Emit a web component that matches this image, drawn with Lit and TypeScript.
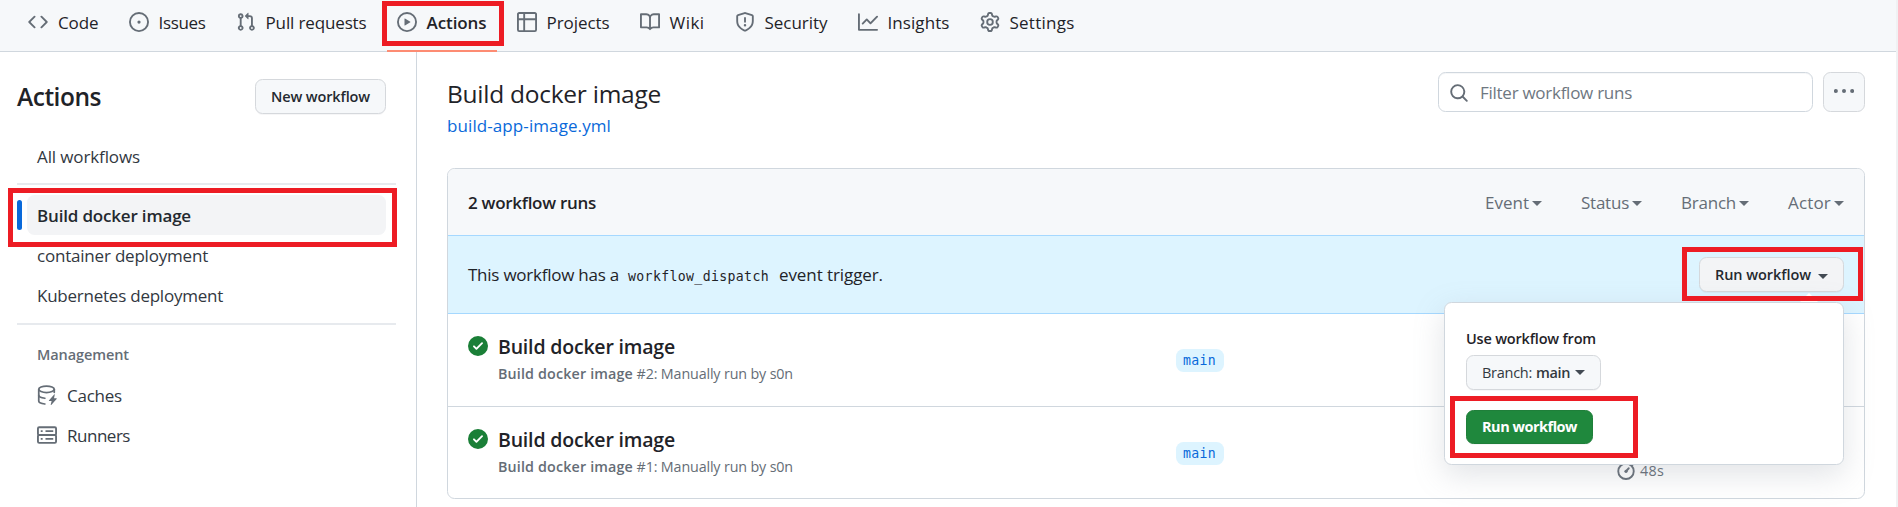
import { LitElement, html, css, svg } from "lit";
import { customElement, property } from "lit/decorators.js";

const icons: Record<string, unknown> = {
  code: svg`<path d="M4.72 3.22a.75.75 0 0 1 1.06 1.06L2.06 8l3.72 3.72a.75.75 0 1 1-1.06 1.06L.47 8.53a.75.75 0 0 1 0-1.06l4.25-4.25Zm6.56 0a.75.75 0 1 0-1.06 1.06L13.94 8l-3.72 3.72a.75.75 0 1 0 1.06 1.06l4.25-4.25a.75.75 0 0 0 0-1.06l-4.25-4.25Z"/>`,
  issue: svg`<path d="M8 9.3a1.3 1.3 0 1 0 0-2.6 1.3 1.3 0 0 0 0 2.6Z"/><path d="M8 0a8 8 0 1 1 0 16A8 8 0 0 1 8 0ZM1.5 8a6.5 6.5 0 1 0 13 0 6.5 6.5 0 0 0-13 0Z"/>`,
  pull: svg`<path d="M1.5 3.25a2.25 2.25 0 1 1 3 2.122v5.256a2.251 2.251 0 1 1-1.5 0V5.372A2.25 2.25 0 0 1 1.5 3.25Zm5.677-.177L9.573.677A.25.25 0 0 1 10 .854V2.5h1A2.5 2.5 0 0 1 13.5 5v5.628a2.251 2.251 0 1 1-1.5 0V5a1 1 0 0 0-1-1h-1v1.646a.25.25 0 0 1-.427.177L7.177 3.427a.25.25 0 0 1 0-.354ZM3.75 2.5a.75.75 0 1 0 0 1.5.75.75 0 0 0 0-1.5Zm0 9.5a.75.75 0 1 0 0 1.5.75.75 0 0 0 0-1.5Zm8.25.75a.75.75 0 1 0 1.5 0 .75.75 0 0 0-1.5 0Z"/>`,
  play: svg`<path d="M8 0a8 8 0 1 1 0 16A8 8 0 0 1 8 0ZM1.5 8a6.5 6.5 0 1 0 13 0 6.5 6.5 0 0 0-13 0Zm4.879-2.773 4.264 2.559a.25.25 0 0 1 0 .428l-4.264 2.559A.25.25 0 0 1 6 10.559V5.442a.25.25 0 0 1 .379-.215Z"/>`,
  table: svg`<path d="M0 1.75C0 .784.784 0 1.75 0h12.5C15.216 0 16 .784 16 1.75v12.5A1.75 1.75 0 0 1 14.25 16H1.75A1.75 1.75 0 0 1 0 14.25ZM6.5 6.5v8h7.75a.25.25 0 0 0 .25-.25V6.5Zm8-1.5V1.75a.25.25 0 0 0-.25-.25H6.5V5Zm-13 1.5v7.75c0 .138.112.25.25.25H5v-8ZM5 5V1.5H1.75a.25.25 0 0 0-.25.25V5Z"/>`,
  book: svg`<path d="M0 1.75A.75.75 0 0 1 .75 1h4.253c1.227 0 2.317.59 3 1.501A3.743 3.743 0 0 1 11.006 1h4.245a.75.75 0 0 1 .75.75v10.5a.75.75 0 0 1-.75.75h-4.507a2.25 2.25 0 0 0-1.591.659l-.622.621a.75.75 0 0 1-1.06 0l-.622-.621A2.25 2.25 0 0 0 5.258 13H.75a.75.75 0 0 1-.75-.75Zm7.251 10.324.004-5.073-.002-2.253A2.25 2.25 0 0 0 5.003 2.5H1.5v9h3.757a3.75 3.75 0 0 1 1.994.574ZM8.755 4.75l-.004 7.322a3.752 3.752 0 0 1 1.992-.572H14.5v-9h-3.495a2.25 2.25 0 0 0-2.25 2.25Z"/>`,
  shield: svg`<path d="M7.467.133a1.748 1.748 0 0 1 1.066 0l5.25 1.68A1.75 1.75 0 0 1 15 3.48V7c0 1.566-.32 3.182-1.303 4.682-.983 1.498-2.585 2.813-5.032 3.855a1.697 1.697 0 0 1-1.33 0c-2.447-1.042-4.049-2.357-5.032-3.855C1.32 10.182 1 8.566 1 7V3.48a1.75 1.75 0 0 1 1.217-1.667Zm.61 1.429a.25.25 0 0 0-.153 0l-5.25 1.68a.25.25 0 0 0-.174.238V7c0 1.358.275 2.666 1.057 3.86.784 1.194 2.121 2.34 4.366 3.297a.196.196 0 0 0 .154 0c2.245-.956 3.582-2.104 4.366-3.298C13.225 9.666 13.5 8.36 13.5 7V3.48a.251.251 0 0 0-.174-.237l-5.25-1.68ZM8.75 4.75v3a.75.75 0 0 1-1.5 0v-3a.75.75 0 0 1 1.5 0ZM9 10.5a1 1 0 1 1-2 0 1 1 0 0 1 2 0Z"/>`,
  graph: svg`<path d="M1.5 1.75V13.5h13.75a.75.75 0 0 1 0 1.5H.75a.75.75 0 0 1-.75-.75V1.75a.75.75 0 0 1 1.5 0Zm14.28 2.53-5.25 5.25a.75.75 0 0 1-1.06 0L7 7.06 4.28 9.78a.751.751 0 0 1-1.042-.018.751.751 0 0 1-.018-1.042l3.25-3.25a.75.75 0 0 1 1.06 0L10 7.94l4.72-4.72a.751.751 0 0 1 1.042.018.751.751 0 0 1 .018 1.042Z"/>`,
  gear: svg`<path d="M8 0a8.2 8.2 0 0 1 .701.031C9.444.095 9.99.645 10.16 1.29l.288 1.107c.018.066.079.158.212.224.231.114.454.243.668.386.123.082.233.09.299.071l1.103-.303c.644-.176 1.392.021 1.82.63.27.385.506.792.704 1.218.315.675.111 1.422-.364 1.891l-.814.806c-.049.048-.098.147-.088.294.016.257.016.515 0 .772-.01.147.038.246.088.294l.814.806c.475.469.679 1.216.364 1.891a7.977 7.977 0 0 1-.704 1.217c-.428.61-1.176.807-1.82.63l-1.102-.302c-.067-.019-.177-.011-.3.071a5.909 5.909 0 0 1-.668.386c-.133.066-.194.158-.211.224l-.29 1.106c-.168.646-.715 1.196-1.458 1.26a8.006 8.006 0 0 1-1.402 0c-.743-.064-1.289-.614-1.458-1.26l-.289-1.106c-.018-.066-.079-.158-.212-.224a5.738 5.738 0 0 1-.668-.386c-.123-.082-.233-.09-.299-.071l-1.103.303c-.644.176-1.392-.021-1.82-.63a8.12 8.12 0 0 1-.704-1.218c-.315-.675-.111-1.422.363-1.891l.815-.806c.05-.048.098-.147.088-.294a6.214 6.214 0 0 1 0-.772c.01-.147-.038-.246-.088-.294l-.815-.806C.635 6.045.431 5.298.746 4.623a7.92 7.92 0 0 1 .704-1.217c.428-.61 1.176-.807 1.82-.63l1.102.302c.067.019.177.011.3-.071.214-.143.437-.272.668-.386.133-.066.194-.158.211-.224l.29-1.106C6.009.645 6.556.095 7.299.03 7.53.01 7.764 0 8 0Zm-.571 1.525c-.036.003-.108.036-.137.146l-.289 1.105c-.147.561-.549.967-.998 1.189-.173.086-.34.183-.5.29-.417.278-.97.423-1.529.27l-1.103-.303c-.109-.03-.175.016-.195.045-.22.312-.412.644-.573.99-.014.031-.021.11.059.19l.815.806c.411.406.562.957.53 1.456a4.709 4.709 0 0 0 0 .582c.032.499-.119 1.05-.53 1.456l-.815.806c-.081.08-.073.159-.059.19.162.346.353.677.573.989.02.03.085.076.195.046l1.102-.303c.56-.153 1.113-.008 1.53.27.161.107.328.204.501.29.447.222.85.629.997 1.189l.289 1.105c.029.109.101.143.137.146a6.6 6.6 0 0 0 1.142 0c.036-.003.108-.036.137-.146l.289-1.105c.147-.561.549-.967.998-1.189.173-.086.34-.183.5-.29.417-.278.97-.423 1.529-.27l1.103.303c.109.029.175-.016.195-.045.22-.313.411-.644.573-.99.014-.031.021-.11-.059-.19l-.815-.806c-.411-.406-.562-.957-.53-1.456a4.709 4.709 0 0 0 0-.582c-.032-.499.119-1.05.53-1.456l.815-.806c.081-.08.073-.159.059-.19a6.464 6.464 0 0 0-.573-.989c-.02-.03-.085-.076-.195-.046l-1.102.303c-.56.153-1.113.008-1.53-.27a4.44 4.44 0 0 0-.501-.29c-.447-.222-.85-.629-.997-1.189l-.289-1.105c-.029-.11-.101-.143-.137-.146a6.6 6.6 0 0 0-1.142 0ZM11 8a3 3 0 1 1-6 0 3 3 0 0 1 6 0ZM9.5 8a1.5 1.5 0 1 0-3.001.001A1.5 1.5 0 0 0 9.5 8Z"/>`,
  search: svg`<path d="M10.68 11.74a6 6 0 0 1-7.922-8.982 6 6 0 0 1 8.982 7.922l3.04 3.04a.749.749 0 0 1-.326 1.275.749.749 0 0 1-.734-.215ZM11.5 7a4.499 4.499 0 1 0-8.997 0A4.499 4.499 0 0 0 11.5 7Z"/>`,
  kebab: svg`<circle cx="1.5" cy="8" r="1.6"/><circle cx="8" cy="8" r="1.6"/><circle cx="14.5" cy="8" r="1.6"/>`,
  check: svg`<path d="M8 16A8 8 0 1 1 8 0a8 8 0 0 1 0 16Zm3.78-9.72a.751.751 0 0 0-.018-1.042.751.751 0 0 0-1.042-.018L6.75 9.19 5.28 7.72a.751.751 0 0 0-1.042.018.751.751 0 0 0-.018 1.042l2 2a.75.75 0 0 0 1.06 0Z"/>`,
  cache: svg`<g fill="none" stroke="currentColor" stroke-width="1.4" stroke-linecap="round"><ellipse cx="7.6" cy="3.4" rx="6.2" ry="2.6"/><path d="M1.4 3.6v9.2c0 1.1 2 2.1 4.9 2.4"/><path d="M1.4 8.2c0 1.2 2 2.1 4.9 2.4"/><path d="M13.8 3.6v2.2"/></g><path d="m13.7 7.6-4.2 4.7c-.2.2 0 .5.2.5h2l-.7 2.8c-.1.4.2.5.4.3l4.3-4.8c.2-.2 0-.5-.2-.5h-1.9l.6-2.8c.1-.3-.3-.5-.5-.2Z"/>`,
  server: svg`<g fill="none" stroke="currentColor" stroke-width="1.5"><rect x=".75" y="1.75" width="14.5" height="6.2" rx="1"/><rect x=".75" y="7.95" width="14.5" height="6.3" rx="1"/></g><path d="M3 4.2h1.5v1.4H3zM6.8 4.2H13v1.4H6.8zM3 10.4h1.5v1.4H3zM6.8 10.4H13v1.4H6.8z"/>`,
  watch: svg`<g fill="none" stroke="currentColor" stroke-width="1.5" stroke-linecap="round"><circle cx="8" cy="9" r="6.2"/><path d="M8 9l2.2-2.4M6.2.9h3.6M13 4l1-1"/></g><circle cx="8" cy="9" r="1.3"/>`,
};

@customElement("ui-icon")
class UiIcon extends LitElement {
  @property() name = "";
  static styles = css`
    :host { display: inline-flex; width: 20px; height: 20px; flex: none; color: #656d76; }
    svg { width: 100%; height: 100%; fill: currentColor; }
  `;
  render() {
    return html`<svg viewBox="0 0 16 16" aria-hidden="true">${icons[this.name]}</svg>`;
  }
}

/** A single-line label whose tracking is adjusted so it fills a set width. */
@customElement("ui-label")
class UiLabel extends LitElement {
  @property() text = "";
  @property({ type: Number }) w = 0;
  static styles = css`
    :host { display: inline-block; white-space: nowrap; flex: none; }
  `;
  render() {
    return html`<span>${this.text}</span>`;
  }
  updated() {
    const span = this.renderRoot.querySelector("span")!;
    span.style.letterSpacing = "0px";
    const natural = span.getBoundingClientRect().width;
    span.style.letterSpacing = `${(this.w - natural) / this.text.length}px`;
    this.style.width = `${this.w}px`;
  }
}

const tabs: [string, string, number][] = [
  ["code", "Code", 40.5],
  ["issue", "Issues", 47],
  ["pull", "Pull requests", 101],
  ["play", "Actions", 60],
  ["table", "Projects", 63],
  ["book", "Wiki", 35],
  ["shield", "Security", 63],
  ["graph", "Insights", 62],
  ["gear", "Settings", 65],
];

const filters: [string, number][] = [["Event", 44], ["Status", 48], ["Branch", 55], ["Actor", 43]];

@customElement("app-root")
class AppRoot extends LitElement {
  static styles = css`
    :host {
      display: block; height: 507px; overflow: hidden; box-sizing: border-box;
      border-right: 2px solid #f0f1f3; background: #fff; color: #1f2328;
      font: 17px/25px "Open Sans", "Noto Sans", sans-serif;
    }
    * { box-sizing: border-box; }
    .semi { font-weight: 600; }
    .mark { position: absolute; border: 5px solid #ed1c24; z-index: 5; pointer-events: none; }

    nav { display: flex; gap: 30px; height: 52px; padding-left: 28px; background: #f6f8fa; border-bottom: 1px solid #d0d7de; }
    .tab { display: flex; gap: 10px; align-items: center; height: 44px; position: relative; }
    .tab ui-label { line-height: 25px; padding-top: 1px; }
    .tab.on { font-weight: 600; }
    .tab.on::after { content: ""; position: absolute; left: -10px; right: -10px; top: 50px; height: 2px; background: #fd8c73; }
    .mark.nav { left: -15px; top: 1px; width: 122px; height: 45px; }

    .page { display: grid; grid-template-columns: 417px 1fr; height: 455px; }
    aside { border-right: 1px solid #d0d7de; padding: 27px 20px 0 17px; }
    .head { display: flex; justify-content: space-between; align-items: center; height: 35px; padding-right: 10px; }
    .h { font-size: 24.5px; line-height: 34px; }
    .btn { display: inline-flex; align-items: center; height: 35px; padding: 0 15px; border: 1px solid #d5d8dc; border-radius: 7.5px; background: #f6f8fa; font-size: 14.5px; line-height: 20px; box-shadow: 0 1px 0 rgba(31,35,40,.04); color: #24292f; }
    .head .btn { margin-top: 0; }
    .item { display: flex; align-items: center; gap: 10px; height: 40px; padding-left: 20px; color: #32383f; }
    .first { margin-top: 22px; }
    .rule { height: 2px; background: #e7eaee; }
    .rule.a { margin: 7px 0 10px; }
    .rule.b { margin: 8px 0 20px; }
    .on-item { position: relative; width: 359px; margin-left: 10px; padding-left: 10px; border-radius: 7.5px; background: #f3f4f6; font-weight: 600; color: #24292f; }
    .on-item::before { content: ""; position: absolute; left: -10px; top: 5px; width: 5px; height: 30px; border-radius: 5px; background: #0969da; }
    .mark.side { left: -19px; top: -7px; width: 389px; height: 59px; }
    .cap { height: 30px; padding-left: 20px; font-size: 14.5px; font-weight: 600; line-height: 20px; color: #656d76; }
    .mgmt { padding-top: 0; }

    main { padding: 20px 31px 0 30px; }
    .top { display: flex; justify-content: space-between; height: 96px; }
    .names { display: flex; flex-direction: column; padding-top: 5px; }
    .names .h { line-height: 34px; }
    .link { color: #0969da; line-height: 25px; margin-top: 2px; }
    .tools { display: flex; gap: 10px; }
    .search { display: flex; align-items: center; gap: 11px; width: 375px; height: 40px; padding-left: 10px; border: 1px solid #d0d7de; border-radius: 7.5px; color: #6e7781; box-shadow: inset 0 1px 0 rgba(208,215,222,.2); }
    .more { display: flex; align-items: center; justify-content: center; width: 42px; height: 40px; border: 1px solid #d5d8dc; border-radius: 7.5px; background: #f6f8fa; }
    .more ui-icon { margin-top: -2px; }
    .search ui-icon { margin-top: 1px; }

    .box { border: 1px solid #d0d7de; border-radius: 7.5px; height: 331px; }
    .bar { display: flex; justify-content: space-between; align-items: center; height: 66px; padding: 1px 20px 0; background: #f6f8fa; border-radius: 7px 7px 0 0; }
    .filters { display: flex; gap: 39px; color: #656d76; }
    .filter { display: flex; align-items: center; gap: 3px; }
    .caret { width: 0; height: 0; border: 5px solid transparent; border-top-color: currentColor; border-bottom: 0; }
    .filter .caret { margin-top: 1px; }
    .banner { display: flex; justify-content: space-between; align-items: center; height: 79px; padding: 0 20px; background: #ddf4ff; border: solid #a5d8ff; border-width: 1px 0; }
    .msg { display: flex; align-items: baseline; padding-top: 1px; }
    .mono { font-family: "DejaVu Sans Mono", "Liberation Mono", monospace; font-size: 13.2px; }
    .msg .mono { margin: 0 10px 0 9px; }
    .anchor { position: relative; display: flex; margin-top: 0; }
    .run { width: 145px; background: #f3f4f6; justify-content: space-between; }
    .run .caret { margin-top: 3px; color: #424a53; }
    .mark.trigger { left: -17px; top: -10px; width: 181px; height: 54px; }

    .pop { position: absolute; right: 0; top: 45px; width: 400px; height: 163px; z-index: 3; padding: 26px 21px 0; border: 1px solid #d0d7de; border-radius: 7.5px; background: #fff; box-shadow: 0 10px 30px rgba(140,149,159,.25); font-size: 14.5px; line-height: 20px; display: flex; flex-direction: column; align-items: flex-start; }
    .pop::before { content: ""; position: absolute; right: 25px; top: -10px; border: 9px solid transparent; border-top: 0; border-bottom-color: #fff; }
    .branch { margin-top: 6px; color: #32383f; }
    .branch .semi { margin-left: 4px; }
    .branch .caret { margin-left: 5px; color: #424a53; }
    .go { position: relative; margin-top: 20px; height: 34px; background: #1f883d; color: #fff; border-color: #1f7f3a; font-weight: 700; }
    .mark.go-mark { left: -17px; top: -15px; width: 188px; height: 62px; }

    .row { display: grid; grid-template-columns: 30px 678px 1fr; padding: 0 20px; height: 92px; }
    .row + .row { border-top: 1px solid #d0d7de; height: 93px; }
    .ok { color: #1a7f37; margin-top: 22px; }
    .text { display: flex; flex-direction: column; padding-top: 19px; }
    .title { font-size: 19.5px; line-height: 27px; font-weight: 600; }
    .sub { display: flex; font-size: 14.3px; line-height: 20px; color: #656d76; margin-top: 4px; }
    .meta { display: flex; align-items: flex-start; justify-content: space-between; }
    .badge { display: flex; align-items: center; height: 23px; margin-top: 35px; padding: 0 8px 0 7px; border-radius: 7.5px; background: #ddf4ff; color: #0969da; }
    .time { display: flex; align-items: center; gap: 4px; height: 20px; width: 228px; padding-left: 0; margin-top: 53px; font-size: 14.3px; color: #656d76; }
    .row .time { margin-top: 53px; }
  `;

  row(num: number) {
    return html`
      <div class="row">
        <ui-icon class="ok" name="check"></ui-icon>
        <div class="text">
          <ui-label class="title" text="Build docker image" w="177"></ui-label>
          <div class="sub">
            <ui-label class="semi" text="Build docker image" w="135"></ui-label>
            <ui-label text=${`\u00a0#${num}: Manually run by s0n`} w="160"></ui-label>
          </div>
        </div>
        <div class="meta">
          <span class="badge mono"><ui-label text="main" w="33"></ui-label></span>
          <span class="time"><ui-icon name="watch"></ui-icon><ui-label text="48s" w="24"></ui-label></span>
        </div>
      </div>`;
  }

  render() {
    return html`
      <nav>
        ${tabs.map(([icon, label, w]) => html`
          <div class="tab ${label === "Actions" ? "on" : ""}">
            <ui-icon name=${icon}></ui-icon><ui-label text=${label} w=${w}></ui-label>
            ${label === "Actions" ? html`<i class="mark nav"></i>` : ""}
          </div>`)}
      </nav>
      <div class="page">
        <aside>
          <div class="head">
            <ui-label class="h semi" text="Actions" w="84"></ui-label>
            <span class="btn semi"><ui-label text="New workflow" w="99"></ui-label></span>
          </div>
          <div class="item first"><ui-label text="All workflows" w="103"></ui-label></div>
          <div class="rule a"></div>
          <div class="item on-item"><ui-label text="Build docker image" w="154"></ui-label><i class="mark side"></i></div>
          <div class="item"><ui-label text="container deployment" w="171"></ui-label></div>
          <div class="item"><ui-label text="Kubernetes deployment" w="186"></ui-label></div>
          <div class="rule b"></div>
          <div class="cap"><ui-label text="Management" w="92"></ui-label></div>
          <div class="item mgmt"><ui-icon name="cache"></ui-icon><ui-label text="Caches" w="55"></ui-label></div>
          <div class="item"><ui-icon name="server"></ui-icon><ui-label text="Runners" w="63"></ui-label></div>
        </aside>
        <main>
          <div class="top">
            <div class="names">
              <ui-label class="h" text="Build docker image" w="214"></ui-label>
              <ui-label class="link" text="build-app-image.yml" w="164"></ui-label>
            </div>
            <div class="tools">
              <div class="search"><ui-icon name="search"></ui-icon><ui-label text="Filter workflow runs" w="152"></ui-label></div>
              <div class="more"><ui-icon name="kebab"></ui-icon></div>
            </div>
          </div>
          <div class="box">
            <div class="bar">
              <ui-label class="semi" text="2 workflow runs" w="128"></ui-label>
              <div class="filters">
                ${filters.map(([f, w]) => html`<span class="filter"><ui-label text=${f} w=${w}></ui-label><i class="caret"></i></span>`)}
              </div>
            </div>
            <div class="banner">
              <div class="msg">
                <ui-label text="This workflow has a" w="151"></ui-label>
                <ui-label class="mono" text="workflow_dispatch" w="141"></ui-label>
                <ui-label text="event trigger." w="104"></ui-label>
              </div>
              <div class="anchor">
                <span class="btn run semi"><ui-label text="Run workflow" w="96"></ui-label><i class="caret"></i></span>
                <div class="pop">
                  <ui-label class="semi" text="Use workflow from" w="130"></ui-label>
                  <span class="btn branch"><ui-label text="Branch:" w="50"></ui-label><ui-label class="semi" text="main" w="34"></ui-label><i class="caret"></i></span>
                  <span class="btn go"><ui-label text="Run workflow" w="95"></ui-label><i class="mark go-mark"></i></span>
                </div>
                <i class="mark trigger"></i>
              </div>
            </div>
            ${this.row(2)}${this.row(1)}
          </div>
        </main>
      </div>`;
  }
}
